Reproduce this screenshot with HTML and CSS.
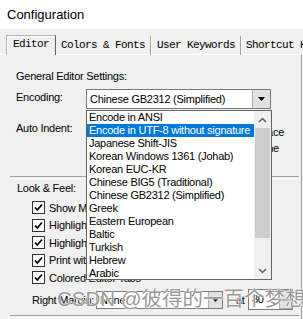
FILE: index.html
```html
<!DOCTYPE html>
<html>
<head>
<meta charset="utf-8">
<link rel="stylesheet" href="styles.css">
</head>
<body>
<div class="window">
  <div class="titlebar">Configuration</div>
  <div class="tabs">
    <div class="tab tab-editor active">Editor</div>
    <div class="tab tab-colors">Colors &amp; Fonts</div>
    <div class="tab tab-user">User Keywords</div>
    <div class="tab tab-short">Shortcut Keys</div>
  </div>
  <div class="panel">
    <div class="section-title">General Editor Settings:</div>
    <div class="row enc-row">
      <span class="label">Encoding:</span>
      <div class="combo combo-wide">
        <span class="combo-text">Chinese GB2312 (Simplified)</span>
        <span class="combo-btn"><svg width="7" height="4" viewBox="0 0 7 4"><path d="M0 0H7L3.5 4Z" fill="#000"/></svg></span>
      </div>
    </div>
    <div class="row indent-row">
      <span class="label">Auto Indent:</span>
      <div class="indent-opts">
        <div class="opt">Replace tabs with space</div>
        <div class="opt opt2">Auto indent on new line</div>
      </div>
    </div>
    <div class="sep"></div>
    <div class="section-title look">Look &amp; Feel:</div>
    <div class="checks">
      <div class="check"><span class="box"><svg width="11" height="11" viewBox="0 0 11 11"><path d="M2 5.5L4.3 8L9 2.5" fill="none" stroke="#000" stroke-width="1.8"/></svg></span>Show Margin</div>
      <div class="check"><span class="box"><svg width="11" height="11" viewBox="0 0 11 11"><path d="M2 5.5L4.3 8L9 2.5" fill="none" stroke="#000" stroke-width="1.8"/></svg></span>Highlight current line</div>
      <div class="check"><span class="box"><svg width="11" height="11" viewBox="0 0 11 11"><path d="M2 5.5L4.3 8L9 2.5" fill="none" stroke="#000" stroke-width="1.8"/></svg></span>Highlight matching braces</div>
      <div class="check"><span class="box"><svg width="11" height="11" viewBox="0 0 11 11"><path d="M2 5.5L4.3 8L9 2.5" fill="none" stroke="#000" stroke-width="1.8"/></svg></span>Print with line numbers</div>
      <div class="check"><span class="box"><svg width="11" height="11" viewBox="0 0 11 11"><path d="M2 5.5L4.3 8L9 2.5" fill="none" stroke="#000" stroke-width="1.8"/></svg></span>Colored Editor Tabs</div>
    </div>
    <div class="row margin-row">
      <span class="label">Right Margin:</span>
      <div class="combo combo-small">
        <span class="combo-text">None</span>
        <span class="combo-btn"><svg width="7" height="4" viewBox="0 0 7 4"><path d="M0 0H7L3.5 4Z" fill="#000"/></svg></span>
      </div>
      <span class="at">at</span>
      <div class="spin">
        <span class="spin-text">80</span>
        <span class="spin-btns"><span class="sb"></span><span class="sb"></span></span>
      </div>
    </div>
    <div class="bottom-sep"></div>

    <div class="listbox">
      <div class="items">
        <div class="item">Encode in ANSI</div>
        <div class="item selected">Encode in UTF-8 without signature</div>
        <div class="item">Japanese Shift-JIS</div>
        <div class="item">Korean Windows 1361 (Johab)</div>
        <div class="item">Korean EUC-KR</div>
        <div class="item">Chinese BIG5 (Traditional)</div>
        <div class="item">Chinese GB2312 (Simplified)</div>
        <div class="item">Greek</div>
        <div class="item">Eastern European</div>
        <div class="item">Baltic</div>
        <div class="item">Turkish</div>
        <div class="item">Hebrew</div>
        <div class="item">Arabic</div>
      </div>
      <div class="scrollbar">
        <div class="arrow"><svg width="9" height="6" viewBox="0 0 9 6"><path d="M1 5L4.5 1.5L8 5" fill="none" stroke="#606060" stroke-width="1.5"/></svg></div>
        <div class="track"><div class="thumb"></div></div>
        <div class="arrow"><svg width="9" height="6" viewBox="0 0 9 6"><path d="M1 1L4.5 4.5L8 1" fill="none" stroke="#606060" stroke-width="1.5"/></svg></div>
      </div>
    </div>

    <div class="watermark">CSDN @彼得的一百个梦想</div>
  </div>
</div>
</body>
</html>
```

FILE: styles.css
```css
html, body {
  margin: 0;
  padding: 0;
}
body {
  width: 303px;
  height: 319px;
  overflow: hidden;
  background: #f0f0f0;
  font-family: "Liberation Sans", Arial, sans-serif;
  font-size: 11px;
  letter-spacing: -0.25px;
  color: #000;
}
.window {
  width: 303px;
  height: 319px;
  display: flex;
  flex-direction: column;
  overflow: hidden;
}
.titlebar {
  height: 29px;
  flex-shrink: 0;
  background: #fff;
  font-size: 13px;
  letter-spacing: 0;
  line-height: 29px;
  padding-left: 7px;
  box-sizing: border-box;
}
.tabs {
  display: flex;
  height: 20px;
  flex-shrink: 0;
  margin-top: 6px;
  padding-left: 6px;
  position: relative;
  z-index: 2;
  overflow: hidden;
}
.tab {
  flex-shrink: 0;
  font-family: "Liberation Mono", "Courier New", monospace;
  font-size: 11px;
  letter-spacing: -0.6px;
  line-height: 18px;
  box-sizing: border-box;
  height: 19px;
  margin-top: 1px;
  white-space: nowrap;
  overflow: hidden;
  border-right: 1px solid #a0a0a0;
  box-shadow: 1px 0 0 #ffffff;
}
.tab.active {
  height: 20px;
  margin-top: 0;
  background: #f0f0f0;
  border-top: 1px solid #b0b0b0;
  border-left: 1px solid #b0b0b0;
  border-right: 1px solid #606060;
  box-shadow: inset 1px 1px 0 #fff;
  padding-left: 6px;
  line-height: 17px;
}
.tab-editor { width: 50px; }
.tab-colors { width: 95px; padding-left: 5px; }
.tab-user { width: 90px; padding-left: 6px; }
.tab-short { width: 62px; padding-left: 5px; border-right: none; box-shadow: none; }

.panel {
  position: relative;
  flex: 1;
  width: 302px;
  box-sizing: border-box;
  border-top: 1px solid #ffffff;
  border-right: 1px solid #a0a0a0;
  margin-top: -1px;
  padding-top: 14px;
}
.section-title {
  line-height: 14px;
  padding-left: 16px;
}
.section-title.look {
  padding-left: 17px;
  margin-top: 2px;
}
.row {
  display: flex;
  align-items: flex-start;
}
.label {
  line-height: 14px;
  white-space: nowrap;
}
.enc-row {
  margin-top: 6px;
  padding-left: 16px;
  height: 20px;
}
.enc-row .label {
  width: 70px;
  padding-top: 1px;
}
.combo {
  display: flex;
  background: #fff;
  border: 1px solid #7a7a7a;
  box-sizing: border-box;
}
.combo-wide {
  width: 185px;
  height: 20px;
}
.combo-text {
  flex: 1;
  padding-left: 3px;
  line-height: 18px;
  white-space: nowrap;
  overflow: hidden;
}
.combo-btn {
  width: 17px;
  background: #e1e1e1;
  border-left: 1px solid #adadad;
  display: flex;
  align-items: center;
  justify-content: center;
}
.indent-row {
  margin-top: 12px;
  padding-left: 16px;
}
.indent-row .label {
  width: 70px;
}
.indent-opts {
  width: 198px;
  margin-top: 3px;
  text-align: right;
  white-space: nowrap;
}
.opt {
  line-height: 16px;
}
.opt2 { padding-right: 5px; }
.sep {
  margin: 20px 2px 0 10px;
  height: 1px;
  border-top: 1px solid #a0a0a0;
  border-bottom: 1px solid #fff;
}
.checks {
  margin-top: 4px;
  padding-left: 32px;
}
.check {
  height: 17.5px;
  display: flex;
  align-items: center;
  white-space: nowrap;
}
.box {
  width: 13px;
  height: 13px;
  box-sizing: border-box;
  border: 1px solid #333;
  background: #fff;
  margin-right: 4px;
  display: flex;
  align-items: center;
  justify-content: center;
}
.margin-row {
  margin-top: 3px;
  padding-left: 32px;
  height: 20px;
  align-items: center;
}
.margin-row .label {
  width: 64px;
}
.combo-small {
  width: 127px;
  height: 18px;
}
.combo-small .combo-text {
  line-height: 16px;
}
.combo-small .combo-btn {
  width: 13px;
}
.at {
  margin-left: 13px;
  width: 12px;
}
.spin {
  display: flex;
  width: 45px;
  height: 21px;
  box-sizing: border-box;
  border: 1px solid #7a7a7a;
  background: #fff;
}
.spin-text {
  flex: 1;
  padding-left: 3px;
  line-height: 19px;
}
.spin-btns {
  width: 13px;
  display: flex;
  flex-direction: column;
}
.sb {
  flex: 1;
  background: #e1e1e1;
  border: 1px solid #adadad;
}
.bottom-sep {
  margin: 5px 2px 0 10px;
  height: 1px;
  border-top: 1px solid #a0a0a0;
  border-bottom: 1px solid #fff;
}

.listbox {
  position: absolute;
  left: 86px;
  top: 55px;
  width: 186px;
  height: 170px;
  box-sizing: border-box;
  border: 1px solid #646464;
  background: #fff;
  display: flex;
  z-index: 3;
}
.items {
  flex: 1;
  overflow: hidden;
}
.item {
  height: 13px;
  line-height: 13px;
  padding-left: 2px;
  white-space: nowrap;
}
.item.selected {
  background: #0078d7;
  color: #fff;
}
.scrollbar {
  width: 17px;
  background: #f0f0f0;
  display: flex;
  flex-direction: column;
}
.arrow {
  height: 17px;
  display: flex;
  align-items: center;
  justify-content: center;
}
.track {
  flex: 1;
  padding: 0 1px;
}
.thumb {
  height: 110px;
  background: #cdcdcd;
}
.watermark {
  position: absolute;
  left: 57px;
  top: 232px;
  z-index: 4;
  font-family: "Liberation Sans", "Noto Sans CJK SC", sans-serif;
  font-size: 20.5px;
  letter-spacing: 0;
  line-height: 24px;
  white-space: nowrap;
  color: rgba(125, 125, 125, 0.8);
  text-shadow: 0 0 1px #fff, 0 0 1px #fff, 0 0 2px #fff;
}
```
